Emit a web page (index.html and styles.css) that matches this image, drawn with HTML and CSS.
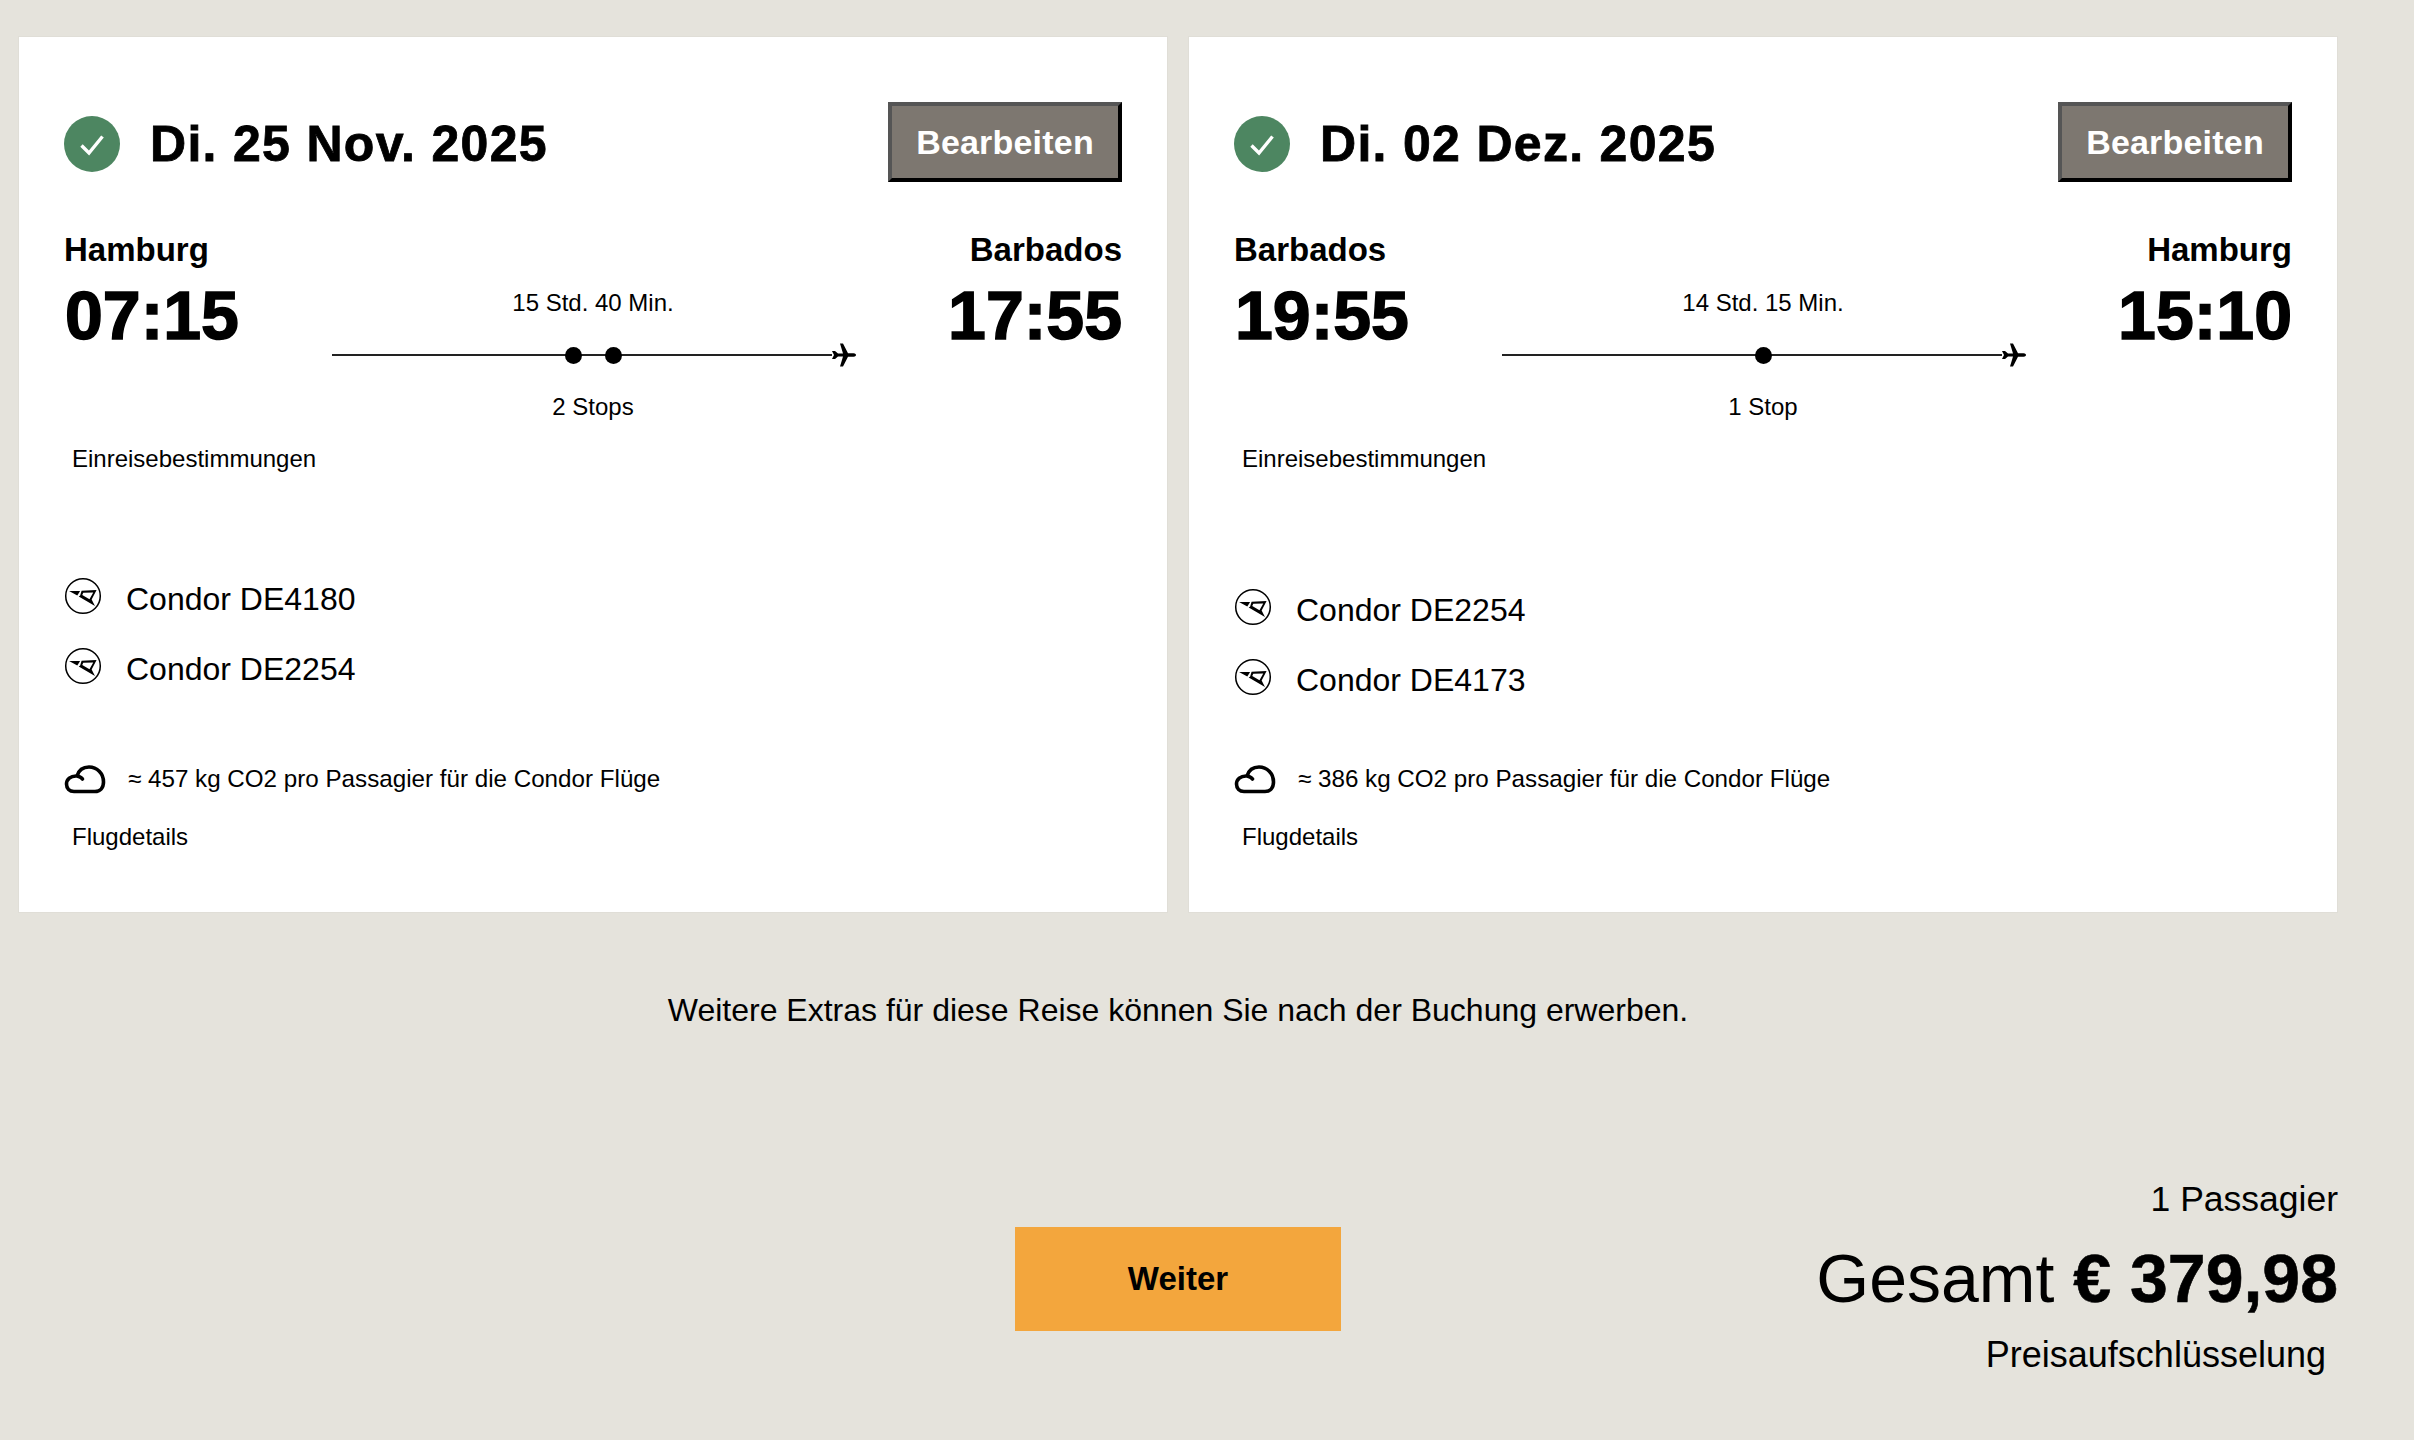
FILE: index.html
```html
<!DOCTYPE html>
<html lang="de" dir="ltr">
  <head>
    <meta charset="UTF-8">
    <meta name="viewport" content="width=device-width, initial-scale=1.0">
    <title>Flugauswahl</title>
    <link rel="stylesheet" href="styles.css">
  </head>
  <body>
    <svg class="defs" width="0" height="0" aria-hidden="true">
      <symbol id="icon-check" viewBox="0 0 56 56">
        <circle cx="28" cy="28" r="28" fill="#4d8661"/>
        <path d="M17.5 29.5 L25 37 L38.5 20.5" fill="none" stroke="#fff" stroke-width="3.4"/>
      </symbol>
      <symbol id="icon-condor" viewBox="0 0 40 40">
        <circle cx="20" cy="20" r="18.2" fill="none" stroke="#000" stroke-width="1.6"/>
        <path d="M5.3 14.8 L17 14.7 L14 19.5 Z" fill="#000"/>
        <path fill-rule="evenodd" d="M18.5 14.6 L34.3 13.8 L29.1 23.7 L32.6 30.5 L15.5 20.5 L17 19.5 Z M20.3 16.5 L30.8 16.3 L26.8 23.3 L19.2 19 Z" fill="#000"/>
      </symbol>
      <symbol id="icon-cloud" viewBox="0 0 42 32">
        <path d="M10 28.5 H31 C36 28.5 39.5 25 39.5 19 C39.5 10.5 33 4 25 4 C18.5 4 14.5 8 13 13 C6.5 12.5 2.5 16.5 2.5 21 C2.5 25.5 5.5 28.5 10 28.5 Z M13 13 C15.5 13.5 17.5 14.5 18.5 16" fill="none" stroke="#000" stroke-width="3.6" stroke-linejoin="round" stroke-linecap="round"/>
      </symbol>
      <symbol id="icon-plane" viewBox="0 0 24 24">
        <path d="M0 8 L3 8 L6 10.5 L11 10.5 L8 0.5 L11 0.5 L16 10.3 L21.5 10.3 C23.5 10.5 24 11.4 24 12 C24 12.6 23.5 13.5 21.5 13.7 L16 13.7 L11 23.5 L8 23.5 L11 13.5 L6 13.5 L3 16 L0 16 L2 12 Z" fill="#000"/>
      </symbol>
    </svg>

    <main class="page">
      <div class="cards">
        <section class="card">
          <div class="card-head">
            <svg class="check"><use href="#icon-check"/></svg>
            <h2 class="date">Di. 25 Nov. 2025</h2>
            <button class="edit-btn">Bearbeiten</button>
          </div>
          <div class="route">
            <div class="stop-from">
              <div class="city">Hamburg</div>
              <div class="time">07:15</div>
            </div>
            <div class="timeline">
              <div class="duration">15 Std. 40 Min.</div>
              <div class="track">
                <span class="line"></span>
                <span class="dots"><i></i><i></i></span>
                <svg class="plane"><use href="#icon-plane"/></svg>
              </div>
              <div class="stops">2 Stops</div>
            </div>
            <div class="stop-to">
              <div class="city">Barbados</div>
              <div class="time">17:55</div>
            </div>
          </div>
          <a class="link entry-link">Einreisebestimmungen</a>
          <ul class="flights">
            <li><svg class="condor"><use href="#icon-condor"/></svg>Condor DE4180</li>
            <li><svg class="condor"><use href="#icon-condor"/></svg>Condor DE2254</li>
          </ul>
          <div class="co2"><svg class="cloud"><use href="#icon-cloud"/></svg>≈ 457 kg CO2 pro Passagier für die Condor Flüge</div>
          <a class="link details-link">Flugdetails</a>
        </section>

        <section class="card card-return">
          <div class="card-head">
            <svg class="check"><use href="#icon-check"/></svg>
            <h2 class="date">Di. 02 Dez. 2025</h2>
            <button class="edit-btn">Bearbeiten</button>
          </div>
          <div class="route">
            <div class="stop-from">
              <div class="city">Barbados</div>
              <div class="time">19:55</div>
            </div>
            <div class="timeline">
              <div class="duration">14 Std. 15 Min.</div>
              <div class="track">
                <span class="line"></span>
                <span class="dots"><i></i></span>
                <svg class="plane"><use href="#icon-plane"/></svg>
              </div>
              <div class="stops">1 Stop</div>
            </div>
            <div class="stop-to">
              <div class="city">Hamburg</div>
              <div class="time">15:10</div>
            </div>
          </div>
          <a class="link entry-link">Einreisebestimmungen</a>
          <ul class="flights">
            <li><svg class="condor"><use href="#icon-condor"/></svg>Condor DE2254</li>
            <li><svg class="condor"><use href="#icon-condor"/></svg>Condor DE4173</li>
          </ul>
          <div class="co2"><svg class="cloud"><use href="#icon-cloud"/></svg>≈ 386 kg CO2 pro Passagier für die Condor Flüge</div>
          <a class="link details-link">Flugdetails</a>
        </section>
      </div>

      <p class="extras">Weitere Extras für diese Reise können Sie nach der Buchung erwerben.</p>

      <div class="summary">
        <span></span>
        <button class="next-btn">Weiter</button>
        <div class="price">
          <div class="pax">1 Passagier</div>
          <div class="total">Gesamt <b>€ 379,98</b></div>
          <a class="breakdown">Preisaufschlüsselung</a>
        </div>
      </div>
    </main>
  </body>
</html>
```

FILE: styles.css
```css
* {
  box-sizing: border-box;
}
body {
  margin: 0;
  background-color: #e5e3dc;
  color: #000;
  font-family: "Liberation Sans", Arial, sans-serif;
}
.defs {
  position: absolute;
}
.page {
  width: 2320px;
  margin-left: 18px;
  padding-top: 36px;
}
.cards {
  display: flex;
  gap: 20px;
}
.card {
  width: 1150px;
  height: 877px;
  padding: 65px 45px 0;
  background-color: #fff;
  border: 1px solid #e0ded7;
}
.card-head {
  display: flex;
  align-items: center;
  height: 80px;
}
.check {
  width: 56px;
  height: 56px;
  margin-top: 3px;
  margin-right: 30px;
}
.date {
  flex: 1;
  margin: 3px 0 0;
  font-size: 50px;
  font-weight: 700;
  letter-spacing: 1.3px;
  -webkit-text-stroke: 0.8px #000;
}
.edit-btn {
  width: 234px;
  height: 80px;
  padding: 0;
  background-color: #7d7770;
  border-width: 4px;
  border-style: solid;
  border-color: #555 #000 #000 #555;
  color: #fff;
  font-family: inherit;
  font-size: 34px;
  font-weight: 700;
  letter-spacing: 0.2px;
}
.route {
  display: grid;
  grid-template-columns: 1fr 526px 1fr;
  height: 262px;
  padding-top: 49px;
}
.city {
  font-size: 33px;
  font-weight: 700;
  line-height: 38px;
}
.time {
  margin-top: 8px;
  margin-left: 1px;
  font-size: 68px;
  font-weight: 700;
  line-height: 76px;
  -webkit-text-stroke: 1.5px #000;
}
.stop-to {
  text-align: right;
}
.timeline {
  padding-top: 57px;
  font-size: 24px;
  text-align: center;
}
.duration {
  line-height: 30px;
}
.track {
  position: relative;
  height: 40px;
  margin-top: 17px;
}
.line {
  display: block;
  position: absolute;
  left: 2px;
  right: 24px;
  top: 19px;
  height: 2px;
  background-color: #222;
}
.dots {
  position: absolute;
  left: 0;
  right: 0;
  top: 12px;
  display: flex;
  justify-content: center;
  gap: 23px;
}
.dots i {
  width: 17px;
  height: 17px;
  border-radius: 50%;
  background-color: #000;
}
.plane {
  position: absolute;
  right: 0;
  top: 8px;
  width: 24px;
  height: 24px;
}
.stops {
  margin-top: 17px;
  line-height: 30px;
}
.link {
  display: block;
  margin-left: 8px;
  font-size: 24px;
  line-height: 30px;
}
.flights {
  list-style: none;
  margin: 0;
  padding: 90px 0 0;
  height: 285px;
  font-size: 32px;
}
.card-return .flights {
  padding-top: 101px;
}
.flights li {
  display: flex;
  align-items: center;
  height: 70px;
}
.condor {
  width: 38px;
  height: 38px;
  margin-right: 24px;
  margin-top: -6px;
}
.co2 {
  display: flex;
  align-items: center;
  font-size: 24.2px;
  height: 40px;
}
.cloud {
  width: 42px;
  height: 32px;
  margin-right: 22px;
}
.details-link {
  margin-top: 23px;
}
.extras {
  margin: 77px 0 0;
  font-size: 32px;
  line-height: 40px;
  text-align: center;
}
.summary {
  display: grid;
  grid-template-columns: 1fr 326px 1fr;
  align-items: center;
  margin-top: 148px;
}
.next-btn {
  height: 104px;
  margin-top: 2px;
  background-color: #f3a63d;
  border: 0;
  font-family: inherit;
  font-size: 33px;
  font-weight: 700;
}
.price {
  text-align: right;
}
.pax {
  font-size: 35.5px;
  line-height: 42px;
}
.total {
  margin-top: 18px;
  font-size: 68px;
  line-height: 80px;
}
.total b {
  -webkit-text-stroke: 0.6px #000;
}
.breakdown {
  display: block;
  margin-top: 15px;
  padding-right: 12px;
  font-size: 36px;
  line-height: 44px;
}
```
